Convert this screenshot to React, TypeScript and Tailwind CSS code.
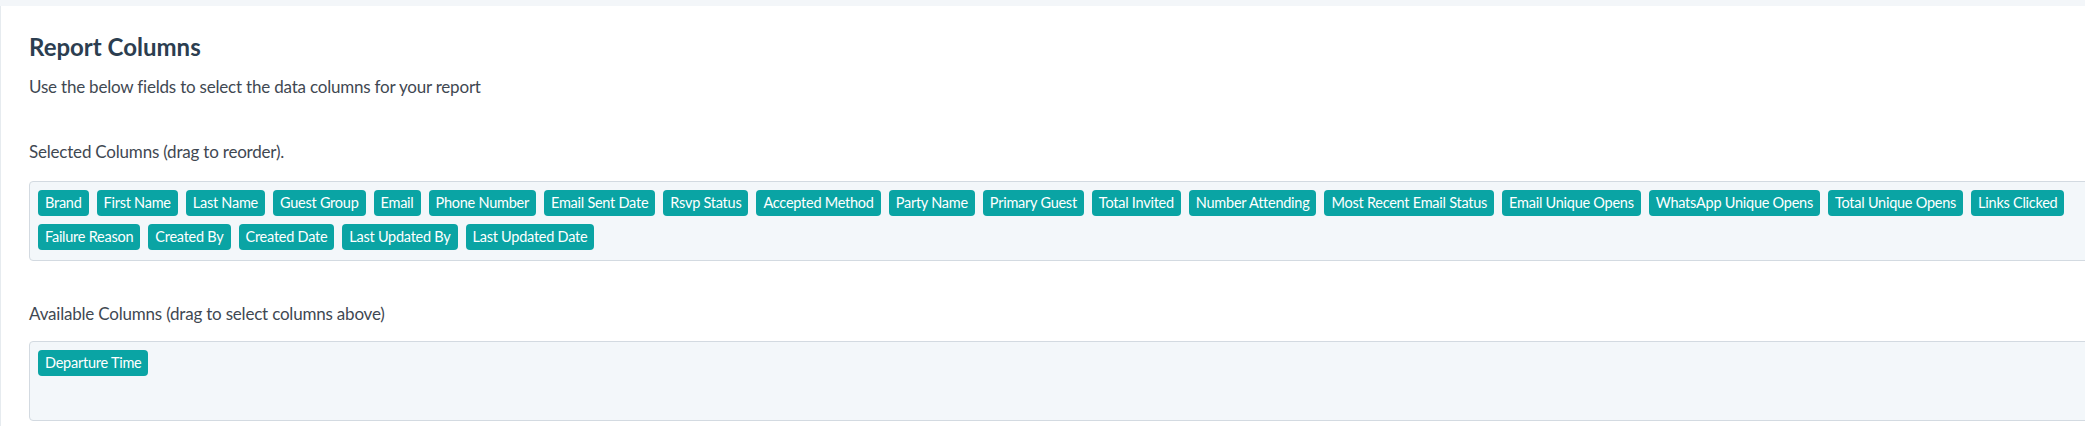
import React from "react";

const selected = [
  "Brand",
  "First Name",
  "Last Name",
  "Guest Group",
  "Email",
  "Phone Number",
  "Email Sent Date",
  "Rsvp Status",
  "Accepted Method",
  "Party Name",
  "Primary Guest",
  "Total Invited",
  "Number Attending",
  "Most Recent Email Status",
  "Email Unique Opens",
  "WhatsApp Unique Opens",
  "Total Unique Opens",
  "Links Clicked",
  "Failure Reason",
  "Created By",
  "Created Date",
  "Last Updated By",
  "Last Updated Date",
];

const available = ["Departure Time"];

function Chip({ label }: { label: string }) {
  return (
    <span className="inline-flex h-[26px] items-center rounded-[4px] bg-[#0aa4a4] px-[7px] text-[14.5px] tracking-[-0.25px] leading-none text-white cursor-move select-none">
      {label}
    </span>
  );
}

function ChipBox({ items }: { items: string[] }) {
  return (
    <div className="w-[2090px] min-h-[80px] rounded-[4px] border border-[#d3dae1] bg-[#f3f7fa] p-2">
      <div className="flex flex-wrap gap-2">
        {items.map((i) => (
          <Chip key={i} label={i} />
        ))}
      </div>
    </div>
  );
}

export default function App() {
  return (
    <div
      className="w-[2085px] h-[426px] overflow-hidden bg-[#f3f6f9] pt-[6px]"
      style={{ fontFamily: "Lato, 'Liberation Sans', sans-serif" }}
    >
      <div className="h-full border-l border-[#e6ebef] bg-white pl-[28px] pt-[26px]">
        <h2 className="text-[24px] font-bold leading-[29px] text-[#2c3e50]">Report Columns</h2>
        <p className="mt-[12px] text-[17px] tracking-[-0.2px] leading-[28px] text-[#3f4852]">
          Use the below fields to select the data columns for your report
        </p>
        <p className="mt-[37px] text-[17px] tracking-[-0.2px] leading-[28px] text-[#3f4852]">
          Selected Columns (drag to reorder).
        </p>
        <div className="mt-[15px]">
          <ChipBox items={selected} />
        </div>
        <p className="mt-[39px] text-[17px] tracking-[-0.2px] leading-[28px] text-[#3f4852]">
          Available Columns (drag to select columns above)
        </p>
        <div className="mt-[13px]">
          <ChipBox items={available} />
        </div>
      </div>
    </div>
  );
}
